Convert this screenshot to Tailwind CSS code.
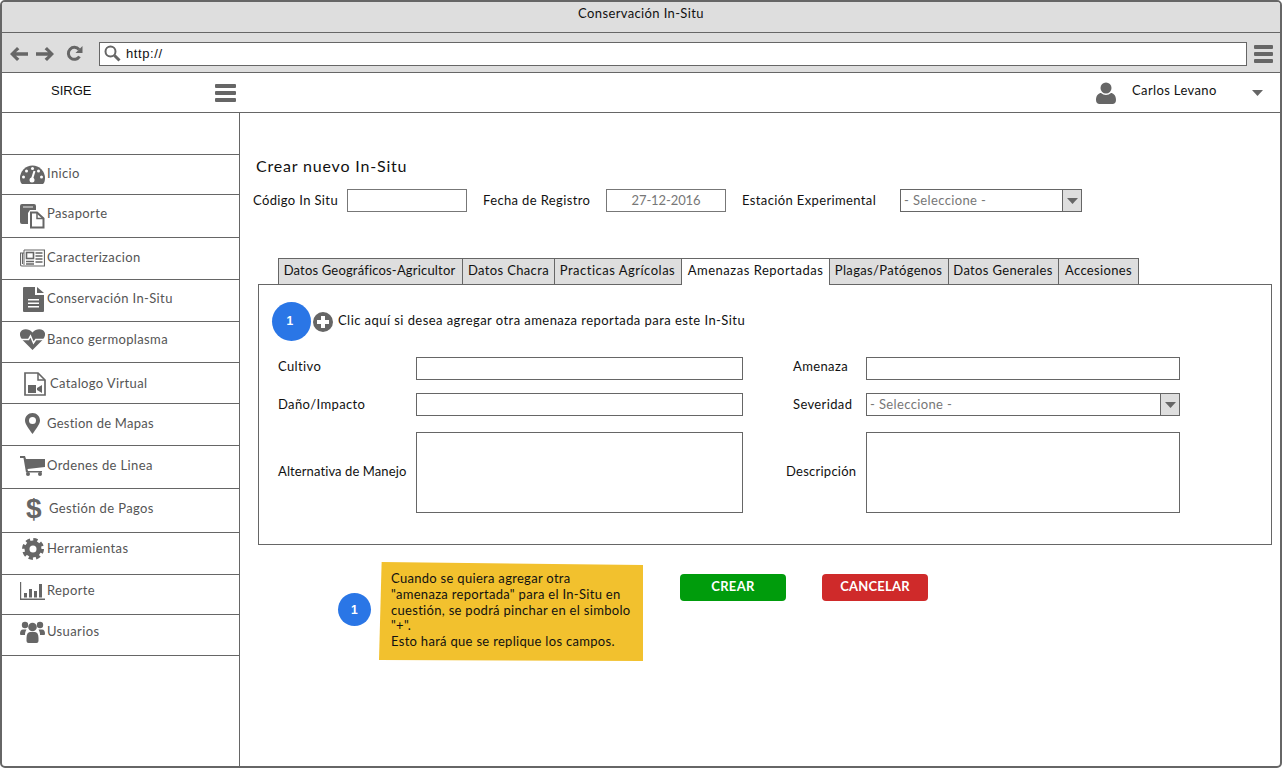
<!DOCTYPE html>
<html lang="es">
<head>
<meta charset="utf-8">
<script src="https://cdn.jsdelivr.net/npm/@tailwindcss/browser@4"></script>
<title>Conservación In-Situ</title>
</head>
<body class="bg-white">
<div class="w-[1282px] h-[768px] border-2 border-[#666] rounded-[5px] overflow-hidden bg-white flex flex-col font-['Lato',sans-serif] text-[13px] text-[#111] tracking-[0.37px]">
  <div class="h-[31px] shrink-0 bg-[#dedede] border-b border-[#666] flex items-center justify-center pb-[7px]">Conservación In-Situ</div>
  <div class="h-[40px] shrink-0 bg-[#dedede] border-b border-[#666] flex items-center pl-[8px] pr-[7px] pt-[2px]">
    <svg class="w-[18px] h-[16px] mr-[8px]" viewBox="0 0 18 16" fill="#666"><path d="M0 8 7 1l2.400 2.200L6 6.300h12v3.400H6l3.400 3.100L7 15z"/></svg>
    <svg class="w-[18px] h-[16px] mr-[12px]" viewBox="0 0 18 16" fill="#666"><path d="M18 8 11 1 8.600 3.200 12 6.300H0v3.400h12l-3.400 3.100L11 15z"/></svg>
    <svg class="w-[17px] h-[17px] mr-[16px]" viewBox="0 0 17 17" fill="none"><path d="M13.500 11.500A6 6 0 1 1 13 4.500" stroke="#666" stroke-width="3"/><path d="M16.500 1v7h-7z" fill="#666"/></svg>
    <div class="w-[1148px] h-[24px] bg-white border border-[#666] flex items-center pl-[4px] gap-[5px]">
      <svg class="w-[17px] h-[17px]" viewBox="0 0 17 17" fill="none" stroke="#666"><circle cx="6.500" cy="6.500" r="5" stroke-width="2"/><path d="M10.500 10.500 15.500 15.500" stroke-width="3"/></svg>
      <span class="font-['Liberation_Sans',sans-serif] text-[13px] tracking-[0.6px]">http://</span>
    </div>
    <div class="ml-[7px] w-[19px] flex flex-col gap-[3px]">
      <div class="h-[4px] rounded-[1px] bg-[#666]"></div><div class="h-[4px] rounded-[1px] bg-[#666]"></div><div class="h-[4px] rounded-[1px] bg-[#666]"></div>
    </div>
  </div>
  <div class="h-[40px] shrink-0 border-b border-[#666] flex items-center">
    <span class="ml-[49px] w-[164px] pb-[4px] font-['Liberation_Sans',sans-serif] text-[13px] tracking-normal">SIRGE</span>
    <div class="w-[21px] flex flex-col gap-[3px]">
      <div class="h-[4px] rounded-[1px] bg-[#666]"></div><div class="h-[4px] rounded-[1px] bg-[#666]"></div><div class="h-[4px] rounded-[1px] bg-[#666]"></div>
    </div>
    <svg class="ml-[860px] w-[20px] h-[22px]" viewBox="0 0 20 22" fill="#666"><circle cx="10" cy="6" r="5.500"/><path d="M0 18c0-5 3-7 5-7 1.500 1.300 3 2 5 2s3.500-.7 5-2c2 0 5 2 5 7 0 2.500-1.500 4-3.500 4h-13C1.500 22 0 20.500 0 18z"/></svg>
    <span class="ml-[16px] w-[120px] pb-[3px]">Carlos Levano</span>
    <svg class="w-[11px] h-[6px]" viewBox="0 0 11 6" fill="#666"><path d="M0 0h11L5.500 6z"/></svg>
  </div>
  <div class="flex flex-1 min-h-0">
    <aside class="w-[238px] shrink-0 border-r border-[#666] text-[#555] flex flex-col">
      <div class="h-[42px] border-b border-[#666]"></div>
      <div class="h-[40px] border-b border-[#666] flex items-center pl-[18px] pb-[2px]">
        <svg class="w-[25px] h-[20px] mr-[2px]" viewBox="0 0 25 20"><path d="M0 14A12.500 12.500 0 0 1 25 14c0 2.500-.5 5-2 6H2C.5 19 0 16.500 0 14z" fill="#666"/><circle cx="12.500" cy="4.500" r="1.500" fill="#fff"/><circle cx="6.500" cy="7" r="1.500" fill="#fff"/><circle cx="18.500" cy="7" r="1.500" fill="#fff"/><circle cx="3.500" cy="13" r="1.500" fill="#fff"/><circle cx="21.500" cy="13" r="1.500" fill="#fff"/><path d="M14.500 7 12 15" stroke="#fff" stroke-width="2"/><circle cx="12" cy="16" r="2.500" fill="#fff"/></svg>
        <span>Inicio</span>
      </div>
      <div class="h-[43px] border-b border-[#666] flex items-center pl-[18px] pb-[4px]">
        <svg class="w-[25px] h-[25px] mr-[2px] mt-[4px]" viewBox="0 0 25 25"><path d="M0 2q0-2 2-2h12q2 0 2 2v4H10L8 9v11H2q-2 0-2-2z" fill="#666"/><path d="M3 2h10v2H3z" fill="#aaa"/><path d="M11 8.500h6l6.500 6V23.500H11z" fill="#fff" stroke="#666" stroke-width="2"/><path d="M17 8.500v6h6.500" fill="none" stroke="#666" stroke-width="1.500"/></svg>
        <span>Pasaporte</span>
      </div>
      <div class="h-[42px] border-b border-[#666] flex items-center pl-[18px] pb-[2px]">
        <svg class="w-[25px] h-[18px] mr-[2px]" viewBox="0 0 25 18" fill="none" stroke="#666"><path d="M4 1h20.500v16H2q-1.500 0-1.500-1.500V4H4" stroke-width="1.200"/><path d="M2.500 4v11M4 1v15" stroke-width="1"/><rect x="6.500" y="3.500" width="7" height="6" stroke-width="1.600"/><path d="M6 12.500h8M6 15h8M15.500 4h7M15.500 7h7M15.500 10h7M15.500 13h7" stroke-width="1.400"/></svg>
        <span>Caracterizacion</span>
      </div>
      <div class="h-[42px] border-b border-[#666] flex items-center pl-[20px] pb-[3px]">
        <svg class="w-[23px] h-[25px]" viewBox="0 0 21 25"><path d="M1 0h11v8h9v16q0 1-1 1H1q-1 0-1-1V1q0-1 1-1z" fill="#666"/><path d="M14 0l7 6h-7z" fill="#666"/><path d="M5 12h11v1.600H5zM5 15.500h11v1.600H5zM5 19h11v1.600H5z" fill="#fff"/></svg>
        <span class="ml-[2px]">Conservación In-Situ</span>
      </div>
      <div class="h-[41px] border-b border-[#666] flex items-center pl-[18px] pb-[5px]">
        <svg class="w-[25px] h-[21px] mr-[2px]" viewBox="0 0 25 21"><path d="M12.500 21 2 10.500C-1 7-.5 3 2 1.300 5-.7 9.500 0 12.500 3.500 15.500 0 20-.7 23 1.300 25.500 3 26 7 23 10.500z" fill="#666"/><path d="M0 10.500h8.500l2-3.500 3 7 2.300-3.500H25" fill="none" stroke="#fff" stroke-width="1.500"/></svg>
        <span>Banco germoplasma</span>
      </div>
      <div class="h-[41px] border-b border-[#666] flex items-center pl-[22px] pt-[2px]">
        <svg class="w-[22px] h-[24px] mr-[4px]" viewBox="0 0 22 24"><path d="M1 1h13l7 7v15H1z" fill="#fff" stroke="#666" stroke-width="1.700"/><path d="M14 1v7h7" fill="none" stroke="#666" stroke-width="1.500"/><path d="M4 13h8v8H4zM13 16l5-3v8l-5-3z" fill="#666"/></svg>
        <span>Catalogo Virtual</span>
      </div>
      <div class="h-[42px] border-b border-[#666] flex items-center pl-[23px] pb-[2px]">
        <svg class="w-[15px] h-[21px] mr-[7px]" viewBox="0 0 15 21"><path d="M7.500 0C3.300 0 0 3.300 0 7.500 0 11 4 16 7.500 21 11 16 15 11 15 7.500 15 3.300 11.700 0 7.500 0z" fill="#666"/><circle cx="7.500" cy="7.500" r="3.500" fill="#fff"/></svg>
        <span class="tracking-[0.25px]">Gestion de Mapas</span>
      </div>
      <div class="h-[43px] border-b border-[#666] flex items-center pl-[18px] pb-[2px]">
        <svg class="w-[25px] h-[20px] mr-[2px]" viewBox="0 0 25 20"><path d="M0 0h5l1 3h19v8L7.500 13l.5 2h14v1.500H6L3.500 2H0z" fill="#666"/><circle cx="8" cy="18" r="2" fill="#666"/><circle cx="20" cy="18" r="2" fill="#666"/></svg>
        <span>Ordenes de Linea</span>
      </div>
      <div class="h-[44px] border-b border-[#666] flex items-center pl-[25px] pb-[4px]">
        <span class="w-[20px] text-[28px] leading-none text-[#666] font-bold font-['Liberation_Sans',sans-serif] -ml-[1px]">$</span>
        <span class="ml-[3px]">Gestión de Pagos</span>
      </div>
      <div class="h-[42px] border-b border-[#666] flex items-center pl-[19px] pb-[10px]">
        <svg class="w-[24px] h-[22px] mr-[2px]" viewBox="0 0 22 22"><circle cx="11" cy="11" r="6" fill="none" stroke="#666" stroke-width="5"/><circle cx="11" cy="11" r="9" fill="none" stroke="#666" stroke-width="4" stroke-dasharray="4.070 3"/></svg>
        <span>Herramientas</span>
      </div>
      <div class="h-[40px] border-b border-[#666] flex items-center pl-[18px] pb-[8px]">
        <svg class="w-[25px] h-[18px] mr-[2px]" viewBox="0 0 25 18" fill="#666"><path d="M0 0h1.200v16.500H25V18H0zM4 11h3v4.500H4zM9 7h3v8.500H9zM14 9h3v6.500h-3zM19 2h3v13.500h-3z"/></svg>
        <span>Reporte</span>
      </div>
      <div class="h-[41px] border-b border-[#666] flex items-center pl-[18px] pb-[7px]">
        <svg class="w-[25px] h-[22px] mr-[2px]" viewBox="0 0 25 22" fill="#666"><circle cx="5" cy="4" r="3.200"/><circle cx="20" cy="4" r="3.200"/><circle cx="12.500" cy="6" r="4.300"/><path d="M0 13c0-3 1-4.500 3-4.500h3.500C5.500 10 5 11.500 5 14H1q-1 0-1-1zM25 13c0-3-1-4.500-3-4.500h-3.500c1 1.500 1.500 3 1.500 5.500h4q1 0 1-1zM6.500 17c0-4 1.500-6 3.500-6h5c2 0 3.500 2 3.500 6v3q0 2-2 2h-8q-2 0-2-2z"/></svg>
        <span>Usuarios</span>
      </div>
    </aside>
    <main class="flex-1 min-w-0 pl-[11px]">
      <h1 class="mt-[43px] ml-[5px] text-[16px] leading-[20px] tracking-[0.82px] font-normal">Crear nuevo In-Situ</h1>
      <div class="mt-[13px] h-[23px] flex items-center ml-[2px]">
        <span class="w-[94px]">Código In Situ</span>
        <div class="w-[120px] h-[23px] border border-[#777]"></div>
        <span class="ml-[16px] w-[123px]">Fecha de Registro</span>
        <div class="w-[120px] h-[23px] border border-[#777] flex items-center justify-center text-[#777] tracking-[-0.1px]">27-12-2016</div>
        <span class="ml-[16px] w-[158px]">Estación Experimental</span>
        <div class="w-[182px] h-[23px] border border-[#666] flex items-center pl-[3px] text-[#777]">
          <span class="flex-1">- Seleccione -</span>
          <div class="w-[19px] h-full bg-[#dedede] border-l border-[#666] flex items-center justify-center"><svg class="w-[11px] h-[6px]" viewBox="0 0 11 6" fill="#666"><path d="M0 0h11L5.500 6z"/></svg></div>
        </div>
      </div>
      <div class="mt-[46px] ml-[27px] flex h-[27px] relative z-10 tracking-[0.35px]">
        <div class="w-[185px] pb-[1px] pr-[2px] bg-[#dedede] border border-[#666] flex items-center justify-center tracking-[0.18px]">Datos Geográficos-Agricultor</div>
        <div class="w-[92px] pb-[1px] bg-[#dedede] border border-l-0 border-[#666] flex items-center justify-center">Datos Chacra</div>
        <div class="w-[127px] pb-[1px] pr-[1px] bg-[#dedede] border border-l-0 border-[#666] flex items-center justify-center tracking-[0.5px]">Practicas Agrícolas</div>
        <div class="w-[148px] pb-[2px] bg-white border-r border-t border-[#666] flex items-center justify-center tracking-[0.52px]">Amenazas Reportadas</div>
        <div class="w-[119px] pb-[1px] pr-[1px] bg-[#dedede] border border-l-0 border-[#666] flex items-center justify-center">Plagas/Patógenos</div>
        <div class="w-[110px] pb-[1px] pr-[1px] bg-[#dedede] border border-l-0 border-[#666] flex items-center justify-center">Datos Generales</div>
        <div class="w-[80px] pb-[1px] bg-[#dedede] border border-l-0 border-[#666] flex items-center justify-center">Accesiones</div>
      </div>
      <section class="-mt-[1px] ml-[7px] w-[1014px] h-[261px] border border-[#666] pt-[17px]">
        <div class="flex items-center pl-[13px] h-[39px]">
          <div class="w-[39px] h-[39px] rounded-full bg-[#2a76e6] text-white text-[12px] flex items-center justify-center pr-[3px] pb-[2px] font-bold font-['Liberation_Sans',sans-serif]">1</div>
          <svg class="ml-[2px] w-[20px] h-[20px]" viewBox="0 0 20 20"><circle cx="10" cy="10" r="10" fill="#666"/><path d="M8 4h4v4h4v4h-4v4H8v-4H4V8h4z" fill="#fff"/></svg>
          <span class="ml-[5px] pb-[2px] tracking-[0.44px]">Clic aquí si desea agregar otra amenaza reportada para este In-Situ</span>
        </div>
        <div class="mt-[16px] h-[23px] flex items-center pl-[19px]">
          <span class="w-[138px] pb-[4px]">Cultivo</span>
          <div class="w-[327px] h-[23px] border border-[#666]"></div>
          <span class="ml-[50px] w-[73px] pb-[4px]">Amenaza</span>
          <div class="w-[314px] h-[23px] border border-[#666]"></div>
        </div>
        <div class="mt-[13px] h-[23px] flex items-center pl-[19px]">
          <span class="w-[138px]">Daño/Impacto</span>
          <div class="w-[327px] h-[23px] border border-[#666]"></div>
          <span class="ml-[50px] w-[73px]">Severidad</span>
          <div class="w-[314px] h-[23px] border border-[#666] flex items-center pl-[3px] text-[#777]">
            <span class="flex-1">- Seleccione -</span>
            <div class="w-[19px] h-full bg-[#dedede] border-l border-[#666] flex items-center justify-center"><svg class="w-[11px] h-[6px]" viewBox="0 0 11 6" fill="#666"><path d="M0 0h11L5.500 6z"/></svg></div>
          </div>
        </div>
        <div class="mt-[16px] h-[81px] flex items-center pl-[19px]">
          <span class="w-[138px] pb-[2px] tracking-[0.1px]">Alternativa de Manejo</span>
          <div class="w-[327px] h-[81px] border border-[#666]"></div>
          <span class="ml-[43px] w-[80px] pb-[2px] tracking-[0.25px]">Descripción</span>
          <div class="w-[314px] h-[81px] border border-[#666]"></div>
        </div>
      </section>
      <div class="mt-[17px] flex items-start">
        <div class="ml-[87px] mt-[31px] w-[33px] h-[33px] rounded-full bg-[#2a76e6] text-white text-[12px] font-bold flex items-center justify-center font-['Liberation_Sans',sans-serif]">1</div>
        <div class="ml-[8px] w-[264px] h-[100px] bg-[#f2c12e] pl-[12px] pt-[9px] leading-[15.750px] tracking-[0.3px] [clip-path:polygon(1%_0,100%_3%,100%_99%,0_98%)]">Cuando se quiera agregar otra<br>"amenaza reportada" para el In-Situ en<br>cuestión, se podrá pinchar en el simbolo<br>"+".<br>Esto hará que se replique los campos.</div>
        <div class="ml-[37px] mt-[12px] w-[106px] h-[27px] rounded-[4px] bg-[#009c0c] text-white font-bold flex items-center justify-center pb-[2px]">CREAR</div>
        <div class="ml-[36px] mt-[12px] w-[106px] h-[27px] rounded-[4px] bg-[#cf2a2a] text-white font-bold flex items-center justify-center pb-[2px] tracking-[0.2px]">CANCELAR</div>
      </div>
    </main>
  </div>
</div>
</body>
</html>
